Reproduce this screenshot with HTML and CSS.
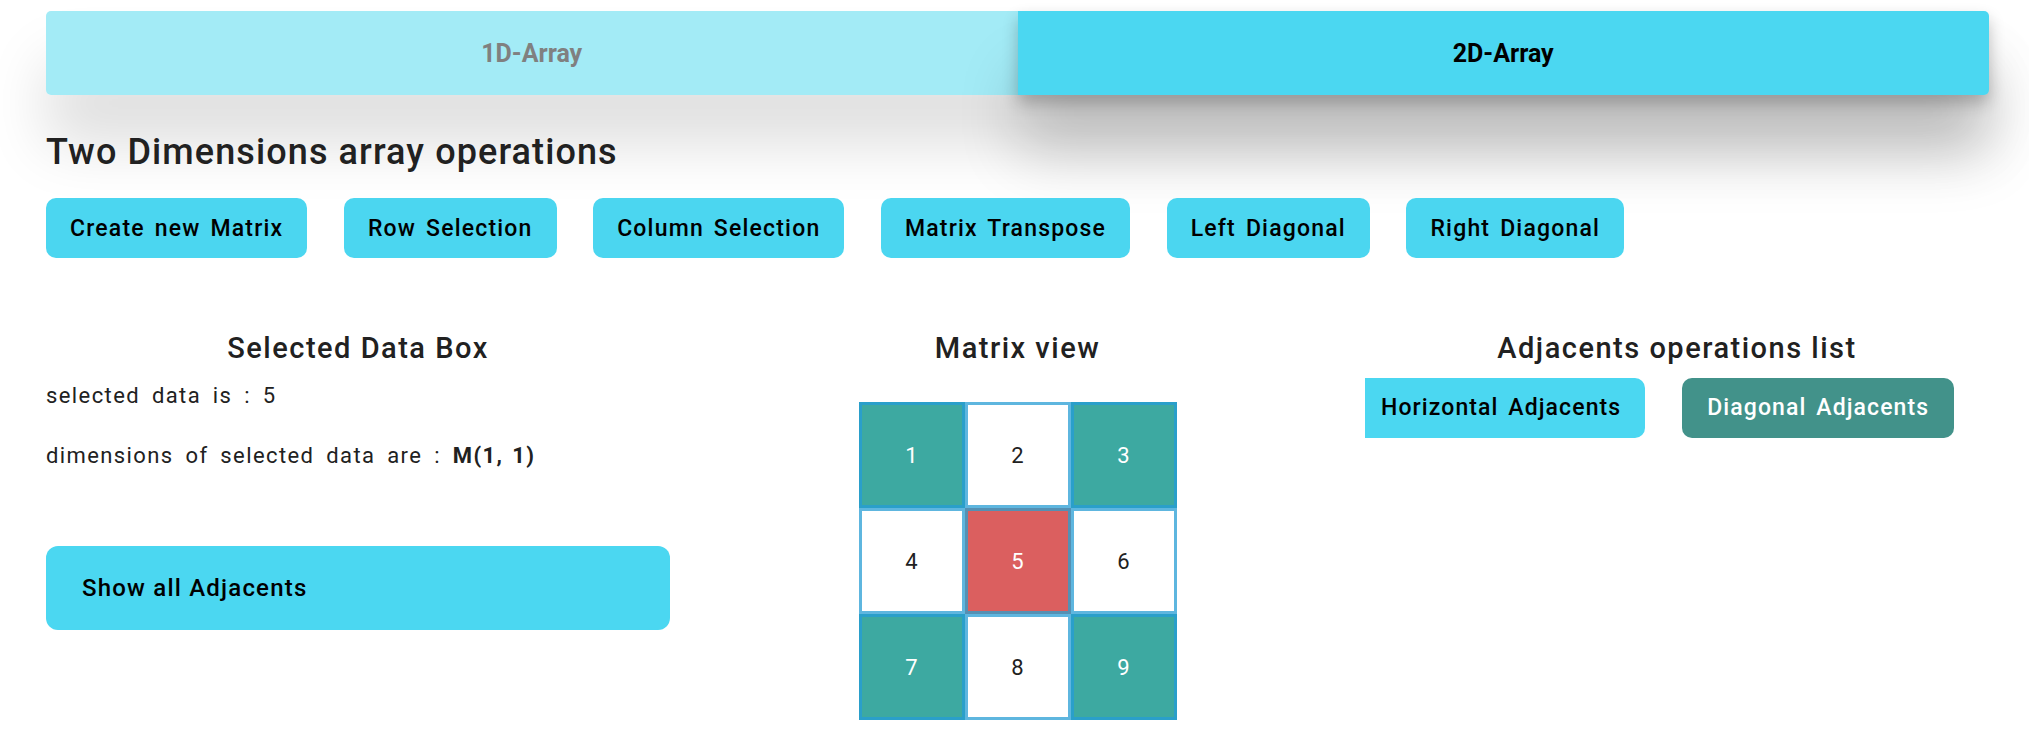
FILE: index.html
```html
<!DOCTYPE html>
<html lang="en">
<head>
<meta charset="utf-8">
<title>Two Dimensions array operations</title>
<link rel="stylesheet" href="styles.css">
</head>
<body>
<div class="page">
  <div class="tabs">
    <div class="tab">1D-Array</div>
    <div class="tab active">2D-Array</div>
  </div>

  <h1 class="title">Two Dimensions array operations</h1>

  <div class="ops">
    <button class="btn">Create new Matrix</button>
    <button class="btn">Row Selection</button>
    <button class="btn">Column Selection</button>
    <button class="btn">Matrix Transpose</button>
    <button class="btn">Left Diagonal</button>
    <button class="btn">Right Diagonal</button>
  </div>

  <div class="panels">
    <section class="panel">
      <h2 class="panel-title">Selected Data Box</h2>
      <p class="info first">selected data is : 5</p>
      <p class="info second">dimensions of selected data are : <b>M(1, 1)</b></p>
      <button class="wide-btn">Show all Adjacents</button>
    </section>

    <section class="panel">
      <h2 class="panel-title">Matrix view</h2>
      <div class="matrix">
        <div class="cell green">1</div>
        <div class="cell">2</div>
        <div class="cell green">3</div>
        <div class="cell">4</div>
        <div class="cell red">5</div>
        <div class="cell">6</div>
        <div class="cell green">7</div>
        <div class="cell">8</div>
        <div class="cell green">9</div>
      </div>
    </section>

    <section class="panel">
      <h2 class="panel-title">Adjacents operations list</h2>
      <div class="adj-row">
        <button class="adj-btn horizontal">Horizontal Adjacents</button>
        <button class="adj-btn diagonal">Diagonal Adjacents</button>
      </div>
    </section>
  </div>
</div>
</body>
</html>
```

FILE: styles.css
```css
* { box-sizing: border-box; }

html, body {
  margin: 0;
  padding: 0;
  background: #ffffff;
}

body {
  font-family: Roboto, "Liberation Sans", Arial, sans-serif;
  color: #212121;
}

.page {
  padding: 11px 40px 0 46px;
}

.tabs {
  display: flex;
  height: 84px;
  border-radius: 5px;
  box-shadow: 0 50px 60px rgba(0, 0, 0, 0.13);
}

.tab {
  flex: 1 1 0;
  display: flex;
  align-items: center;
  justify-content: center;
  font-size: 25px;
  font-weight: 700;
  color: #808080;
  background: #a3ebf6;
  border-radius: 5px 0 0 5px;
}

.tab.active {
  color: #000000;
  background: #4bd7f1;
  border-radius: 0 5px 5px 0;
  box-shadow: 0 8px 16px rgba(0, 0, 0, 0.24), 0 60px 60px rgba(0, 0, 0, 0.17);
}

.title {
  margin: 36px 0 0 0;
  font-size: 36px;
  line-height: 1.2;
  font-weight: 500;
  letter-spacing: 1.1px;
  color: #212121;
}

.ops {
  display: flex;
  gap: 36.5px;
  margin-top: 24px;
}

.btn {
  height: 60px;
  padding: 0 24px;
  border: none;
  border-radius: 10px;
  background: #4bd6f0;
  font-family: inherit;
  font-size: 23px;
  font-weight: 500;
  letter-spacing: 1.2px;
  word-spacing: 3px;
  color: #000000;
}

.panels {
  display: grid;
  grid-template-columns: repeat(3, 1fr);
  column-gap: 35.5px;
  margin-top: 73px;
}

.panel {
  display: flex;
  flex-direction: column;
}

.panel-title {
  margin: 0;
  text-align: center;
  font-size: 29px;
  line-height: 1.2;
  font-weight: 500;
  letter-spacing: 1.5px;
  color: #212121;
}

.info {
  margin: 0;
  font-size: 22px;
  line-height: 30px;
  letter-spacing: 1.4px;
  word-spacing: 5px;
  color: #212121;
}

.info.first { margin-top: 15.5px; }
.info.second { margin-top: 30px; }

.info b {
  font-weight: 700;
  word-spacing: 2px;
}

.wide-btn {
  margin-top: 74.5px;
  height: 84px;
  width: 100%;
  padding: 0 0 0 36px;
  text-align: left;
  border: none;
  border-radius: 12px;
  background: #4bd7f1;
  font-family: inherit;
  font-size: 24px;
  font-weight: 500;
  letter-spacing: 1.2px;
  color: #000000;
}

.matrix {
  align-self: center;
  margin-top: 36.5px;
  display: grid;
  grid-template-columns: repeat(3, 106px);
  grid-auto-rows: 106px;
}

.cell {
  display: flex;
  align-items: center;
  justify-content: center;
  border: 3px solid #5eb6df;
  background: #ffffff;
  font-size: 22px;
  color: #212121;
}

.cell.green {
  background: #3da9a1;
  border-color: #2a9fca;
  color: #ffffff;
}

.cell.red {
  background: #db5f5f;
  border-color: #5590b3;
  color: #ffffff;
}

.adj-row {
  display: flex;
  gap: 37px;
  margin-top: 12px;
}

.adj-btn {
  height: 60px;
  border: none;
  font-family: inherit;
  font-size: 23px;
  font-weight: 500;
  letter-spacing: 1.1px;
  word-spacing: 3px;
}

.adj-btn.horizontal {
  padding: 0 24px 0 16px;
  border-radius: 0 10px 10px 0;
  background: #4bd7f1;
  color: #000000;
}

.adj-btn.diagonal {
  padding: 0 25px;
  border-radius: 10px;
  background: #42928a;
  color: #ffffff;
}
```
